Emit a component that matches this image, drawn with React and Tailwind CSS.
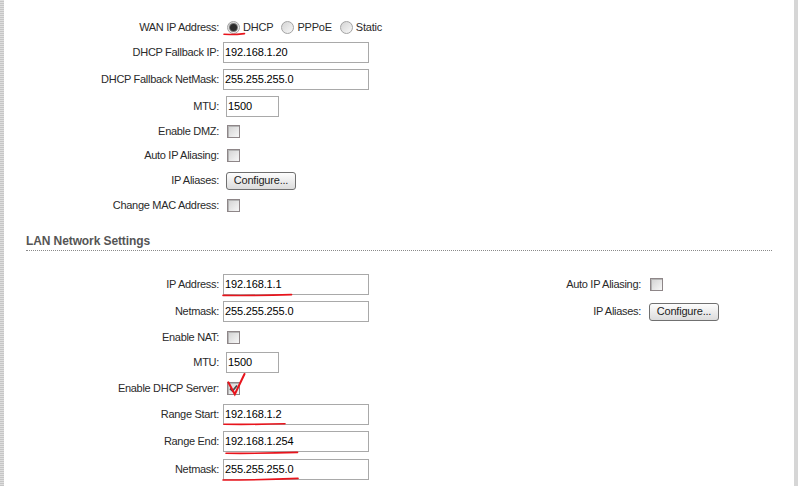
import React from 'react'

const font = "font-['Liberation_Sans',Arial,sans-serif]"

function TextBox({ value, narrow }) {
    return (
        <div
            className={`flex h-[21px] items-center border border-[#a9a9a9] bg-white pl-[1px] text-[11px] tracking-[-0.15px] text-black ${narrow ? 'ml-[3px] w-[53px]' : 'w-[146px]'}`}
        >
            {value}
        </div>
    )
}

function Check({ checked }) {
    return (
        <span className="ml-[4px] flex h-[13px] w-[13px] items-center justify-center border border-[#8e8688] bg-gradient-to-br from-[#d2d2d2] to-[#f7f7f7] shadow-[inset_1px_1px_0_#b5b5b5]">
            {checked ? (
                <svg width="9" height="9" viewBox="0 0 9 9">
                    <path d="M1 4.5 L3.5 7 L8 1.5" stroke="#4a4a4a" strokeWidth="1.8" fill="none" />
                </svg>
            ) : null}
        </span>
    )
}

function Radio({ on, label }) {
    return (
        <span className="mr-[4px] flex items-center">
            <span className="ml-[4px] flex h-[13px] w-[13px] items-center justify-center rounded-full border border-[#a3a3a3] bg-gradient-to-br from-[#d4d4d4] to-[#f8f8f8]">
                {on ? <span className="h-[7px] w-[7px] rounded-full bg-[#2c2c2c] shadow-[0_0_0_1px_#777]" /> : null}
            </span>
            <span className="ml-[3px] tracking-[-0.2px]">{label}</span>
        </span>
    )
}

function Button() {
    return (
        <button
            type="button"
            className="flex h-[18px] w-[70px] items-center justify-center rounded-[3px] border border-[#707070] bg-gradient-to-b from-[#fdfdfd] to-[#dcdcdc] text-[11px] tracking-[-0.2px] text-[#222]"
        >
            Configure...
        </button>
    )
}

function Row({ label, h, children }) {
    return (
        <div className="flex items-center" style={{ height: h }}>
            <div className="w-[215px] text-right tracking-[-0.3px]">{label}</div>
            <div className="ml-[4px] flex items-center">{children}</div>
        </div>
    )
}

function App() {
    return (
        <div className={`relative flex h-[486px] w-[798px] overflow-hidden bg-white text-[11px] text-[#2a2a2a] ${font}`}>
            <div className="w-[4px] bg-[#d5d5d5] bg-[repeating-linear-gradient(0deg,#c6c6c6_0_1px,#dedede_1px_2px)]" />

            <div className="flex-1 pt-[15px]">
                <Row label="WAN IP Address:" h={24}>
                    <Radio on label="DHCP" />
                    <Radio label="PPPoE" />
                    <Radio label="Static" />
                </Row>
                <Row label="DHCP Fallback IP:" h={26}>
                    <TextBox value="192.168.1.20" />
                </Row>
                <Row label="DHCP Fallback NetMask:" h={28}>
                    <TextBox value="255.255.255.0" />
                </Row>
                <Row label="MTU:" h={26}>
                    <TextBox value="1500" narrow />
                </Row>
                <Row label="Enable DMZ:" h={24}>
                    <Check />
                </Row>
                <Row label="Auto IP Aliasing:" h={25}>
                    <Check />
                </Row>
                <Row label="IP Aliases:" h={25}>
                    <span className="ml-[3px]">
                        <Button />
                    </span>
                </Row>
                <Row label="Change MAC Address:" h={25}>
                    <Check />
                </Row>

                <div className="ml-[22px] mr-[22px] mt-[16px] h-[17px] border-b border-dotted border-[#8a8a8a]">
                    <h2 className="text-[12px] font-bold leading-[14px] tracking-[-0.1px] text-[#555]">LAN Network Settings</h2>
                </div>

                <div className="mt-[19px] flex">
                    <div>
                        <Row label="IP Address:" h={28}>
                            <TextBox value="192.168.1.1" />
                        </Row>
                        <Row label="Netmask:" h={27}>
                            <TextBox value="255.255.255.0" />
                        </Row>
                        <Row label="Enable NAT:" h={25}>
                            <Check />
                        </Row>
                        <Row label="MTU:" h={25}>
                            <TextBox value="1500" narrow />
                        </Row>
                        <Row label="Enable DHCP Server:" h={26}>
                            <Check checked />
                        </Row>
                        <Row label="Range Start:" h={26}>
                            <TextBox value="192.168.1.2" />
                        </Row>
                        <Row label="Range End:" h={28}>
                            <TextBox value="192.168.1.254" />
                        </Row>
                        <Row label="Netmask:" h={29}>
                            <TextBox value="255.255.255.0" />
                        </Row>
                    </div>
                    <div className="ml-[64px]">
                        <div className="flex h-[28px] items-center">
                            <div className="w-[208px] text-right tracking-[-0.3px]">Auto IP Aliasing:</div>
                            <span className="ml-[5px]">
                                <Check />
                            </span>
                        </div>
                        <div className="flex h-[27px] items-center">
                            <div className="w-[208px] text-right tracking-[-0.3px]">IP Aliases:</div>
                            <span className="ml-[8px]">
                                <Button />
                            </span>
                        </div>
                    </div>
                </div>
            </div>

            <div className="w-[4px] bg-[#d6d6d6]" />

            {/* red annotation marks drawn over the form */}
            <svg className="pointer-events-none absolute left-0 top-0" width="798" height="486">
                <g stroke="#e8141c" strokeWidth="1.6" fill="none" strokeLinecap="round">
                    <path d="M224 34.3 Q234 34.8 244.5 33.6" />
                    <path d="M223 295.4 Q258 295.8 291.5 294.6" />
                    <path d="M224 424.3 Q255 424.6 285 423.8" />
                    <path d="M226 453.3 Q262 453.6 297.5 452.4" />
                    <path d="M223 480 Q262 480 298 478.4" />
                    <path d="M228.3 382.3 L234.8 394.2 L244.5 374" strokeWidth="2" />
                </g>
            </svg>
        </div>
    )
}

export default App
